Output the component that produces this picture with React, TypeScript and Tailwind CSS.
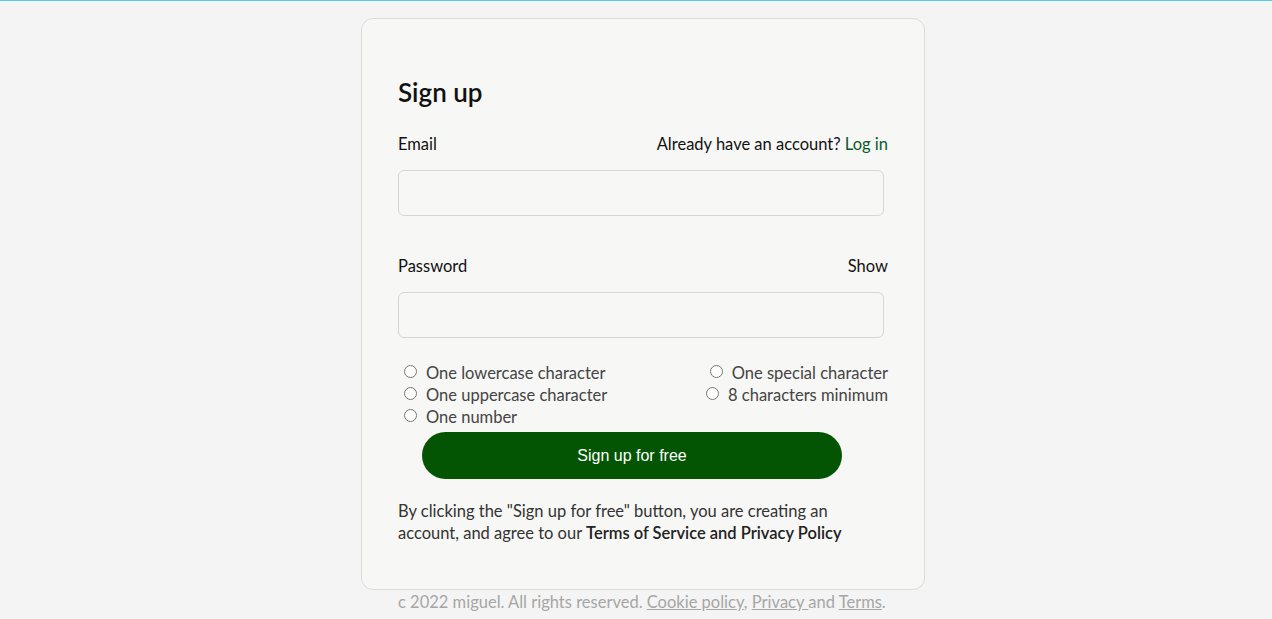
import { useState } from "react";

const rules = {
  left: ["One lowercase character", "One uppercase character", "One number"],
  right: ["One special character", "8 characters minimum"],
};

function Rule({ label }: { label: string }) {
  return (
    <label className="flex items-center gap-[9px] leading-[22px]">
      <input type="radio" className="m-0 h-[13px] w-[13px] -translate-y-[2px]" />
      <span>{label}</span>
    </label>
  );
}

export default function App() {
  const [show, setShow] = useState(false);

  return (
    <div
      className="flex min-h-[619px] justify-center border-t border-[#5bc8e6] bg-[#f4f4f4] pl-[14px] text-[16.5px] text-[#111]"
      style={{ fontFamily: "Lato, 'Noto Sans', sans-serif" }}
    >
      <div className="flex w-[564px] flex-col pt-[17px]">
        <div className="rounded-[12px] border border-[#dcdcdc] bg-[#f7f7f5] px-[36px] pb-[45px] pt-[56px]">
          <h1 className="text-[26px] font-semibold leading-[34px] text-[#111]">Sign up</h1>

          <div className="mt-[23px] flex items-center justify-between leading-[24px]">
            <span>Email</span>
            <span>
              Already have an account?{" "}
              <a href="#" className="text-[#0b5a2c]">
                Log in
              </a>
            </span>
          </div>
          <input
            type="email"
            className="mt-[14px] block h-[46px] w-[486px] rounded-[6px] border border-[#d6d6d6] bg-[#f7f7f5] px-3 outline-none"
          />

          <div className="mt-[38px] flex items-center justify-between leading-[24px]">
            <span>Password</span>
            <button type="button" onClick={() => setShow(!show)} className="cursor-pointer">
              {show ? "Hide" : "Show"}
            </button>
          </div>
          <input
            type={show ? "text" : "password"}
            className="mt-[14px] block h-[46px] w-[486px] rounded-[6px] border border-[#d6d6d6] bg-[#f7f7f5] px-3 outline-none"
          />

          <div className="mt-[24px] flex justify-between pl-[6px] text-[#444]">
            <div className="flex flex-col">
              {rules.left.map((r) => (
                <Rule key={r} label={r} />
              ))}
            </div>
            <div className="flex flex-col items-end">
              {rules.right.map((r) => (
                <Rule key={r} label={r} />
              ))}
            </div>
          </div>

          <button
            type="button"
            className="ml-[24px] mt-[4px] block h-[47px] w-[420px] rounded-full bg-[#035503] text-[16px] text-white"
            style={{ fontFamily: "'Liberation Sans', Arial, sans-serif" }}
          >
            Sign up for free
          </button>

          <p className="mt-[21px] leading-[22px] text-[#333]">
            By clicking the "Sign up for free" button, you are creating an
            <br />
            account, and agree to our <span className="font-semibold text-[#222]">Terms of Service and Privacy Policy</span>
          </p>
        </div>

        <p className="mt-[1px] pl-[37px] leading-[22px] text-[#a6a6a6]">
          c 2022 miguel. All rights reserved. <a href="#" className="underline">Cookie policy</a>,{" "}
          <a href="#" className="underline">Privacy </a> and <a href="#" className="underline">Terms</a>.
        </p>
      </div>
    </div>
  );
}
